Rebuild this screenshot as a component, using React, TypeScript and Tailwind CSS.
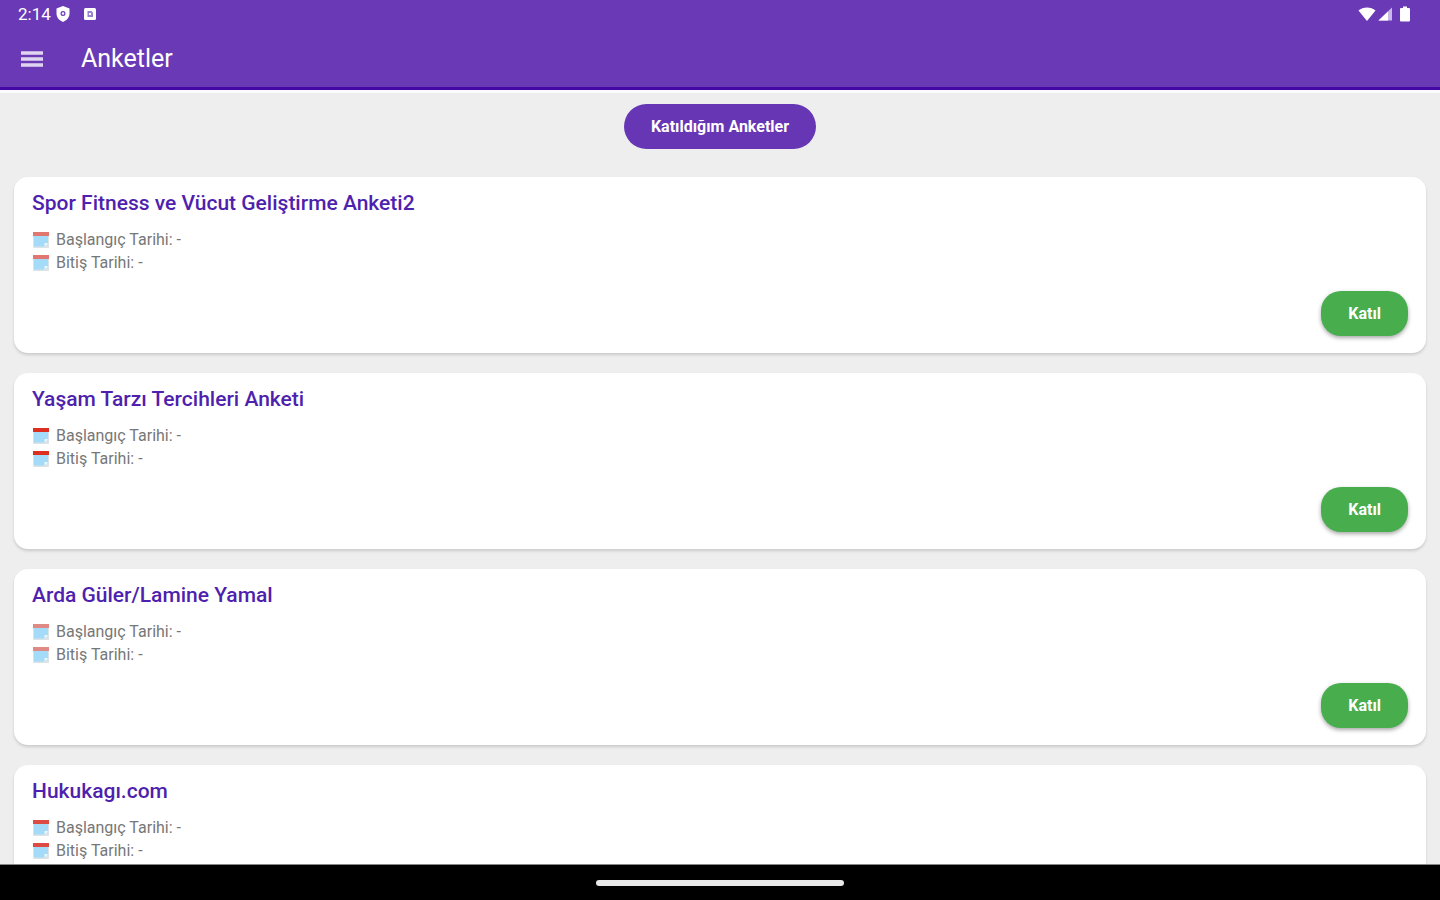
type Survey = {
  title: string;
  start: string;
  end: string;
  header: string;
};

const surveys: Survey[] = [
  { title: "Spor Fitness ve Vücut Geliştirme Anketi2", start: "-", end: "-", header: "#e07770" },
  { title: "Yaşam Tarzı Tercihleri Anketi", start: "-", end: "-", header: "#dc2f20" },
  { title: "Arda Güler/Lamine Yamal", start: "-", end: "-", header: "#e08a85" },
  { title: "Hukukagı.com", start: "-", end: "-", header: "#dc4c42" },
];

function CalendarIcon({ header }: { header: string }) {
  return (
    <svg width="18" height="18" viewBox="0 0 18 18" aria-hidden="true">
      <path d="M1 2h16v14a1 1 0 0 1-1 1H2a1 1 0 0 1-1-1z" fill="#dbe3e7" />
      <path d="M2 5h14v7l-3.500 3.500H2z" fill="#a3dbf8" />
      <path d="M16 12l-3.500 3.500v-2.500a1 1 0 0 1 1-1z" fill="#f2f9fc" />
      <rect x="1" y="1" width="16" height="4" fill={header} />
    </svg>
  );
}

function StatusBar() {
  return (
    <div className="flex h-7 items-center justify-between pl-[18px] pr-[29px]">
      <div className="flex items-center">
        <span className="text-[17px] leading-5">2:14</span>
        <svg className="ml-1" width="16" height="18" viewBox="0 0 16 18" aria-hidden="true">
          <path
            fillRule="evenodd"
            fill="#fff"
            d="M8 1l6.500 2.500v5c0 4-2.800 7-6.500 8.500C4.300 15.500 1.500 12.500 1.500 8.500v-5zM8 6a2.500 2.500 0 1 0 0 5 2.500 2.500 0 0 0 0-5z"
          />
          <circle cx="8" cy="8.500" r="1.200" fill="#fff" />
        </svg>
        <svg className="ml-3" width="14" height="14" viewBox="0 0 14 14" aria-hidden="true">
          <rect x="1" y="1" width="12" height="12" rx="1.500" fill="#fff" />
          <path d="M4.500 4h4L10 5.500V10H4.500z" fill="#9d80d0" />
          <path d="M6 6h2v2h-2z" fill="#fff" />
        </svg>
      </div>
      <div className="flex items-center">
        <svg width="18" height="16" viewBox="0 0 18 16" aria-hidden="true">
          <path d="M0.500 4.500C5 0.500 13 0.500 17.500 4.500L9 15z" fill="#fff" />
        </svg>
        <svg className="ml-0.5" width="15" height="16" viewBox="0 0 15 16" aria-hidden="true">
          <path d="M14 1.500v13H0.500z" fill="#c9b8e8" />
          <path d="M10 5.500v9H0.500z" fill="#fff" />
        </svg>
        <svg className="ml-1.5" width="12" height="16" viewBox="0 0 12 16" aria-hidden="true">
          <path d="M4 0.500h4v1.500h2a1 1 0 0 1 1 1v11.500a1 1 0 0 1-1 1H2a1 1 0 0 1-1-1V3a1 1 0 0 1 1-1h2z" fill="#fff" />
        </svg>
      </div>
    </div>
  );
}

function SurveyCard({ survey }: { survey: Survey }) {
  return (
    <li className="flex shrink-0 flex-col rounded-[14px] bg-white px-[18px] pt-[14px] pb-[17px] shadow-[0_2px_3px_rgba(0,0,0,0.15)]">
      <h2 className="text-[21px] leading-6 font-medium text-[#4f1fae]">{survey.title}</h2>
      <div className="mt-[13px] text-[16px] leading-[23px] text-[#777777]">
        <p className="flex items-center gap-1.5">
          <CalendarIcon header={survey.header} />
          Başlangıç Tarihi: {survey.start}
        </p>
        <p className="flex items-center gap-1.5">
          <CalendarIcon header={survey.header} />
          Bitiş Tarihi: {survey.end}
        </p>
      </div>
      <button
        type="button"
        className="mt-[17px] h-[45px] cursor-pointer self-end rounded-[20px] bg-[#47ad4d] px-[27px] text-[16px] leading-5 font-bold text-white shadow-[0_2px_4px_rgba(0,0,0,0.35)]"
      >
        Katıl
      </button>
    </li>
  );
}

export default function App() {
  return (
    <div className="flex h-screen flex-col overflow-hidden bg-[#eeeeee] font-['Roboto',sans-serif]">
      <header className="shrink-0 border-b-[3px] border-[#4507a5] bg-[#6a39b5] text-white">
        <StatusBar />
        <div className="flex h-[59px] items-center pt-[3px] pl-5">
          <button type="button" aria-label="Menü" className="cursor-pointer">
            <svg width="24" height="18" viewBox="0 0 24 18" aria-hidden="true">
              <path d="M1 3h22M1 9h22M1 15h22" stroke="#e0d5f0" strokeWidth="3.500" />
            </svg>
          </button>
          <h1 className="ml-[37px] text-[25px] leading-8">Anketler</h1>
        </div>
      </header>

      <main className="flex min-h-0 flex-1 flex-col overflow-y-auto border-t-[3px] border-[#fbfbfb] px-[14px] pt-[11px] [scrollbar-width:none]">
        <button
          type="button"
          className="h-[45px] shrink-0 cursor-pointer self-center rounded-full bg-[#6736b4] px-[27px] text-[16px] leading-5 font-bold text-white"
        >
          Katıldığım Anketler
        </button>
        <ul className="mt-7 flex flex-col gap-5 pb-5">
          {surveys.map((survey) => (
            <SurveyCard key={survey.title} survey={survey} />
          ))}
        </ul>
      </main>

      <footer className="flex h-9 shrink-0 items-center justify-center border-t border-[#888888] bg-black">
        <div className="h-1.5 w-[248px] rounded-full bg-[#e8e8e8]" />
      </footer>
    </div>
  );
}
